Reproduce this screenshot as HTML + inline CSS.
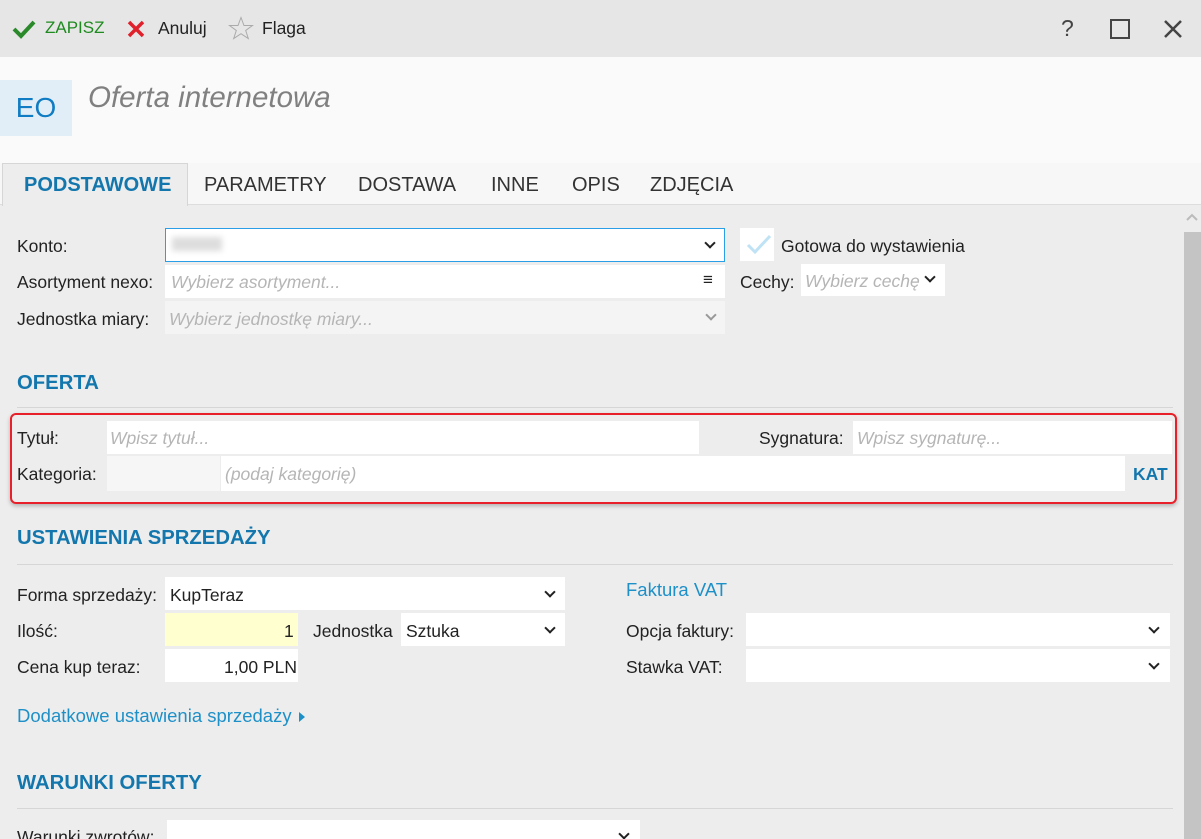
<!DOCTYPE html>
<html style="width:1201px;height:839px;overflow:hidden"><head><meta charset="utf-8"><style>
*{box-sizing:border-box;margin:0;padding:0}
body{width:1201px;height:839px;overflow:hidden;background:#ededed;font-family:"Liberation Sans",sans-serif;font-size:17.5px;color:#222;position:relative}
.a{position:absolute;white-space:nowrap}
.in{position:absolute;background:#fff;height:33px}
.ph{color:#b5b5b5;font-style:italic}
.h{color:#1377ad;font-weight:bold;font-size:20.3px}
.line{position:absolute;left:17px;width:1156px;height:1px;background:#d6d6d6}
.chev{position:absolute;width:8px;height:8px;border-right:2px solid #222;border-bottom:2px solid #222;transform:rotate(45deg)}
</style></head><body>
<div class="a" style="left:0;top:0;width:1201px;height:57px;background:#e6e6e6"></div>
<svg class="a" style="left:12px;top:19px" width="24" height="20"><path d="M2 10 L9 17 L22 3" stroke="#2a8a2a" stroke-width="4" fill="none"/></svg>
<div class="a" style="left:45px;top:18px;color:#1f8a1f;font-size:17px">ZAPISZ</div>
<svg class="a" style="left:126px;top:19px" width="20" height="20"><path d="M3 3L17 17M17 3L3 17" stroke="#e0202a" stroke-width="3.5"/></svg>
<div class="a" style="left:158px;top:18px;font-size:17.5px">Anuluj</div>
<svg class="a" style="left:228px;top:16px" width="26" height="24"><path d="M13 1.5L16 9.5H24.5L17.7 14.5L20.3 22.5L13 17.7L5.7 22.5L8.3 14.5L1.5 9.5H10Z" stroke="#aaa" fill="none"/></svg>
<div class="a" style="left:262px;top:18px;font-size:17.5px">Flaga</div>
<div class="a" style="left:1061px;top:15px;font-size:23px;color:#444">?</div>
<div class="a" style="left:1110px;top:19px;width:20px;height:20px;border:2.5px solid #444"></div>
<svg class="a" style="left:1163px;top:19px" width="20" height="20"><path d="M2 2L18 18M18 2L2 18" stroke="#444" stroke-width="2.5"/></svg>
<div class="a" style="left:0;top:57px;width:1201px;height:106px;background:#fafafa"></div>
<div class="a" style="left:0;top:80px;width:72px;height:56px;background:#e2eef7;color:#0f7cc3;font-size:28px;text-align:center;line-height:56px">EO</div>
<div class="a" style="left:88px;top:81px;font-size:29.5px;font-style:italic;color:#808080">Oferta internetowa</div>
<div class="a" style="left:0;top:163px;width:1201px;height:42px;background:#f7f7f7;border-bottom:1px solid #ddd"></div>
<div class="a" style="left:2px;top:163px;width:186px;height:43px;background:#ededed;border:1px solid #d6d6d6;border-bottom:none"></div>
<div class="a" style="left:24px;top:174px;font-size:20px;font-weight:bold;color:#1377ad">PODSTAWOWE</div>
<div class="a" style="left:204px;top:174px;font-size:20px;color:#333">PARAMETRY</div>
<div class="a" style="left:358px;top:174px;font-size:20px;color:#333">DOSTAWA</div>
<div class="a" style="left:491px;top:174px;font-size:20px;color:#333">INNE</div>
<div class="a" style="left:572px;top:174px;font-size:20px;color:#333">OPIS</div>
<div class="a" style="left:650px;top:174px;font-size:20px;color:#333">ZDJĘCIA</div>
<div class="a" style="left:1183px;top:206px;width:18px;height:633px;background:#ededed"></div>
<div class="a" style="left:1184px;top:232px;width:17px;height:607px;background:#c4c4c4"></div>
<svg class="a" style="left:1185px;top:212px" width="14" height="10"><path d="M2 8L7 3L12 8" stroke="#bbb" stroke-width="2" fill="none"/></svg>

<div class="a" style="left:17px;top:236px">Konto:</div>
<div class="in" style="left:165px;top:228px;width:560px;height:34px;border:1px solid #2a9fe8"></div>
<div class="a" style="left:172px;top:237px;width:50px;height:14px;background:#ddd;filter:blur(3px)"></div>
<div class="chev" style="left:706px;top:239px"></div>
<div class="a" style="left:17px;top:272px">Asortyment nexo:</div>
<div class="in" style="left:165px;top:265px;width:560px"></div>
<div class="a ph" style="left:171px;top:272px">Wybierz asortyment...</div>
<div class="a" style="left:703px;top:270px;font-size:17px">≡</div>
<div class="a" style="left:17px;top:309px">Jednostka miary:</div>
<div class="in" style="left:165px;top:301px;width:560px;background:#f4f4f4"></div>
<div class="a ph" style="left:169px;top:309px">Wybierz jednostkę miary...</div>
<div class="chev" style="left:707px;top:311px;border-color:#999"></div>
<div class="a" style="left:740px;top:228px;width:34px;height:33px;background:#fff"></div>
<svg class="a" style="left:745px;top:232px" width="28" height="24"><path d="M3 13L10 20L25 4" stroke="#bfe3f5" stroke-width="3" fill="none"/></svg>
<div class="a" style="left:781px;top:236px">Gotowa do wystawienia</div>
<div class="a" style="left:740px;top:272px">Cechy:</div>
<div class="in" style="left:801px;top:264px;width:144px;height:32px"></div>
<div class="a ph" style="left:805px;top:271px">Wybierz cechę</div>
<div class="chev" style="left:926px;top:273px"></div>

<div class="a h" style="left:17px;top:372px">OFERTA</div>
<div class="line" style="top:407px"></div>
<div class="a" style="left:10px;top:413px;width:1167px;height:91px;border:2px solid #e8202a;border-radius:6px;box-shadow:0 2px 4px rgba(0,0,0,.25)"></div>
<div class="a" style="left:17px;top:428px">Tytuł:</div>
<div class="in" style="left:107px;top:421px;width:592px"></div>
<div class="a ph" style="left:110px;top:428px">Wpisz tytuł...</div>
<div class="a" style="left:759px;top:428px">Sygnatura:</div>
<div class="in" style="left:853px;top:421px;width:319px"></div>
<div class="a ph" style="left:857px;top:428px">Wpisz sygnaturę...</div>
<div class="a" style="left:17px;top:464px">Kategoria:</div>
<div class="in" style="left:107px;top:456px;width:113px;height:35px;background:#f6f6f6"></div>
<div class="in" style="left:221px;top:456px;width:904px;height:35px"></div>
<div class="a ph" style="left:225px;top:464px">(podaj kategorię)</div>
<div class="a" style="left:1133px;top:464px;font-weight:bold;color:#1377ad;font-size:17.5px">KAT</div>

<div class="a h" style="left:17px;top:527px">USTAWIENIA SPRZEDAŻY</div>
<div class="line" style="top:564px"></div>
<div class="a" style="left:17px;top:585px">Forma sprzedaży:</div>
<div class="in" style="left:165px;top:577px;width:400px"></div>
<div class="a" style="left:170px;top:585px">KupTeraz</div>
<div class="chev" style="left:546px;top:588px"></div>
<div class="a" style="left:17px;top:621px">Ilość:</div>
<div class="in" style="left:165px;top:613px;width:133px;background:#ffffd0"></div>
<div class="a" style="left:284px;top:621px">1</div>
<div class="a" style="left:313px;top:621px">Jednostka</div>
<div class="in" style="left:401px;top:613px;width:164px"></div>
<div class="a" style="left:406px;top:621px">Sztuka</div>
<div class="chev" style="left:546px;top:624px"></div>
<div class="a" style="left:17px;top:657px">Cena kup teraz:</div>
<div class="in" style="left:165px;top:649px;width:133px"></div>
<div class="a" style="left:224px;top:657px">1,00 PLN</div>
<div class="a" style="left:17px;top:705px;color:#1e90c8;font-size:18.5px">Dodatkowe ustawienia sprzedaży</div>
<svg class="a" style="left:298px;top:711px" width="8" height="12"><path d="M1 1L7 6L1 11Z" fill="#1e90c8"/></svg>
<div class="a" style="left:626px;top:579px;color:#1e90c8;font-size:18.5px">Faktura VAT</div>
<div class="a" style="left:626px;top:621px">Opcja faktury:</div>
<div class="in" style="left:746px;top:613px;width:424px"></div>
<div class="chev" style="left:1150px;top:624px"></div>
<div class="a" style="left:626px;top:657px">Stawka VAT:</div>
<div class="in" style="left:746px;top:649px;width:424px"></div>
<div class="chev" style="left:1150px;top:660px"></div>

<div class="a h" style="left:17px;top:772px">WARUNKI OFERTY</div>
<div class="line" style="top:808px"></div>
<div class="a" style="left:17px;top:827px">Warunki zwrotów:</div>
<div class="in" style="left:167px;top:820px;width:473px;height:19px"></div>
<div class="chev" style="left:620px;top:830px"></div>
</body></html>
